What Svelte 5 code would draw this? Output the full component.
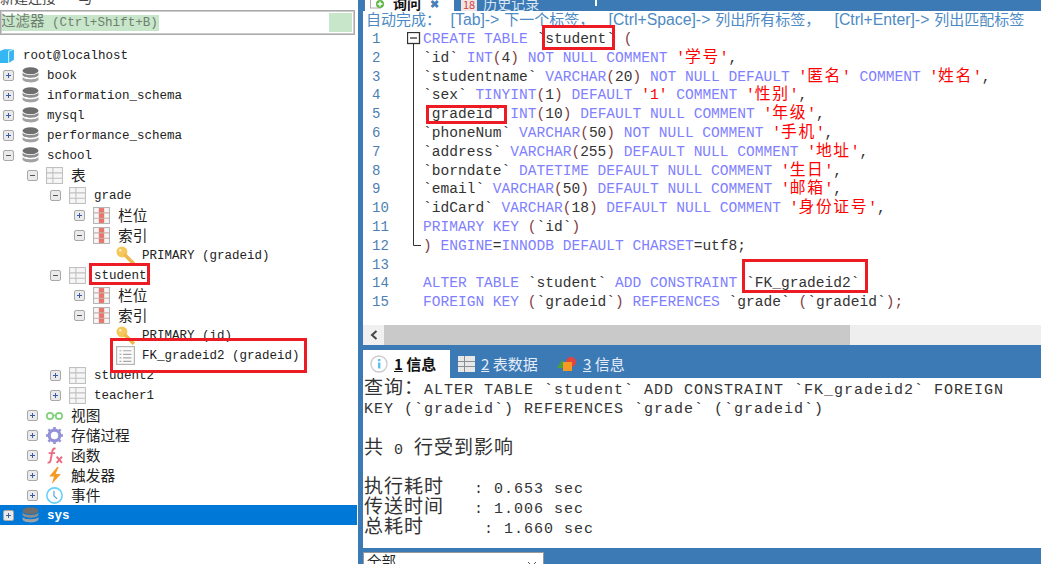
<script lang="ts">
  type Row = { depth: number; label: string; icon: string; exp?: string; selected?: boolean };

  const rows: Row[] = [
    { depth: -1, label: "root@localhost", icon: "server" },
    { depth: 0, label: "book", icon: "db", exp: "+" },
    { depth: 0, label: "information_schema", icon: "db", exp: "+" },
    { depth: 0, label: "mysql", icon: "db", exp: "+" },
    { depth: 0, label: "performance_schema", icon: "db", exp: "+" },
    { depth: 0, label: "school", icon: "db", exp: "-" },
    { depth: 1, label: "表", icon: "table", exp: "-" },
    { depth: 2, label: "grade", icon: "table", exp: "-" },
    { depth: 3, label: "栏位", icon: "columns", exp: "+" },
    { depth: 3, label: "索引", icon: "columns", exp: "-" },
    { depth: 4, label: "PRIMARY (gradeid)", icon: "key" },
    { depth: 2, label: "student", icon: "table", exp: "-" },
    { depth: 3, label: "栏位", icon: "columns", exp: "+" },
    { depth: 3, label: "索引", icon: "columns", exp: "-" },
    { depth: 4, label: "PRIMARY (id)", icon: "key" },
    { depth: 4, label: "FK_gradeid2 (gradeid)", icon: "index" },
    { depth: 2, label: "student2", icon: "table", exp: "+" },
    { depth: 2, label: "teacher1", icon: "table", exp: "+" },
    { depth: 1, label: "视图", icon: "view", exp: "+" },
    { depth: 1, label: "存储过程", icon: "gear", exp: "+" },
    { depth: 1, label: "函数", icon: "fx", exp: "+" },
    { depth: 1, label: "触发器", icon: "bolt", exp: "+" },
    { depth: 1, label: "事件", icon: "clock", exp: "+" },
    { depth: 0, label: "sys", icon: "db", exp: "+", selected: true },
  ];

  // k keyword, i identifier, p paren, s string
  const code: [string, string][][] = [
    [["k", "CREATE TABLE "], ["i", "`student` "], ["p", "("]],
    [["i", "`id` "], ["k", "INT"], ["p", "("], ["i", "4"], ["p", ")"], ["k", " NOT NULL COMMENT "], ["s", "'学号'"], ["i", ","]],
    [["i", "`studentname` "], ["k", "VARCHAR"], ["p", "("], ["i", "20"], ["p", ")"], ["k", " NOT NULL DEFAULT "], ["s", "'匿名'"], ["k", " COMMENT "], ["s", "'姓名'"], ["i", ","]],
    [["i", "`sex` "], ["k", "TINYINT"], ["p", "("], ["i", "1"], ["p", ")"], ["k", " DEFAULT "], ["s", "'1'"], ["k", " COMMENT "], ["s", "'性别'"], ["i", ","]],
    [["i", "`gradeid` "], ["k", "INT"], ["p", "("], ["i", "10"], ["p", ")"], ["k", " DEFAULT NULL COMMENT "], ["s", "'年级'"], ["i", ","]],
    [["i", "`phoneNum` "], ["k", "VARCHAR"], ["p", "("], ["i", "50"], ["p", ")"], ["k", " NOT NULL COMMENT "], ["s", "'手机'"], ["i", ","]],
    [["i", "`address` "], ["k", "VARCHAR"], ["p", "("], ["i", "255"], ["p", ")"], ["k", " DEFAULT NULL COMMENT "], ["s", "'地址'"], ["i", ","]],
    [["i", "`borndate` "], ["k", "DATETIME DEFAULT NULL COMMENT "], ["s", "'生日'"], ["i", ","]],
    [["i", "`email` "], ["k", "VARCHAR"], ["p", "("], ["i", "50"], ["p", ")"], ["k", " DEFAULT NULL COMMENT "], ["s", "'邮箱'"], ["i", ","]],
    [["i", "`idCard` "], ["k", "VARCHAR"], ["p", "("], ["i", "18"], ["p", ")"], ["k", " DEFAULT NULL COMMENT "], ["s", "'身份证号'"], ["i", ","]],
    [["k", "PRIMARY KEY "], ["p", "("], ["i", "`id`"], ["p", ")"]],
    [["p", ") "], ["k", "ENGINE"], ["i", "="], ["k", "INNODB DEFAULT CHARSET"], ["i", "=utf8;"]],
    [],
    [["k", "ALTER TABLE "], ["i", "`student` "], ["k", "ADD CONSTRAINT "], ["i", "`FK_gradeid2`"]],
    [["k", "FOREIGN KEY "], ["p", "("], ["i", "`gradeid`"], ["p", ") "], ["k", "REFERENCES "], ["i", "`grade` "], ["p", "("], ["i", "`gradeid`"], ["p", ");"]],
  ];

  const hint = "自动完成\uff1a  [Tab]-> 下一个标签\uff0c   [Ctrl+Space]-> 列出所有标签\uff0c   [Ctrl+Enter]-> 列出匹配标签";

  const messages = [
    "查询\uff1aALTER TABLE `student` ADD CONSTRAINT `FK_gradeid2` FOREIGN",
    "KEY (`gradeid`) REFERENCES `grade` (`gradeid`)",
    "",
    "共 0 行受到影响",
    "",
    "执行耗时   : 0.653 sec",
    "传送时间   : 1.006 sec",
    "总耗时      : 1.660 sec",
  ];

  const marks = [
    { x: 89, y: 263, w: 61, h: 22 },
    { x: 110, y: 338, w: 197, h: 35 },
    { x: 542, y: 25, w: 73, h: 25 },
    { x: 426, y: 105, w: 81, h: 19 },
    { x: 742, y: 259, w: 126, h: 34 },
  ];

  // split a string into latin and CJK runs so each gets its own size
  function runs(text: string): { cjk: boolean; text: string }[] {
    const parts = text.match(/[\u3000-\u9fff\uff00-\uffef]+|[^\u3000-\u9fff\uff00-\uffef]+/g) ?? [];
    return parts.map((part) => ({ cjk: /^[\u3000-\u9fff\uff00-\uffef]/.test(part), text: part }));
  }
</script>

{#snippet mixed(text: string)}
  {#each runs(text) as run}
    {#if run.cjk}<span class="cjk">{run.text}</span>{:else}{run.text}{/if}
  {/each}
{/snippet}

{#snippet icon(name: string)}
  {@const size = name === "key" || name === "index" ? 19 : 17}
  <svg viewBox="0 0 16 16" width={size} height={size} aria-hidden="true">
    {#if name === "server"}
      <path d="M1 4 L6 2 H15 V12 L10 15 H1 Z" fill="#35b5f2" />
      <path d="M10 4 V15 M10 4 L15 2" stroke="#d5f0fc" stroke-width="1" fill="none" />
    {:else if name === "db"}
      <ellipse cx="8" cy="3.6" rx="7.5" ry="3.3" fill="#6e6e6e" />
      <path d="M0.5 5 C2 8.5 14 8.5 15.5 5 V7.5 C14 11 2 11 0.5 7.5 Z" fill="#8d8d8d" />
      <path d="M0.5 9.4 C2 12.2 14 12.2 15.5 9.4 V11.8 C14 15.4 2 15.4 0.5 11.8 Z" fill="#a2a2a2" />
    {:else if name === "table"}
      <rect x="0.5" y="0.5" width="15" height="15" fill="#f6f6f6" stroke="#c0c0c0" />
      <path d="M0.5 5.5 H15.5 M0.5 10.5 H15.5 M6.5 0.5 V15.5" stroke="#c0c0c0" fill="none" />
    {:else if name === "columns"}
      <rect x="0.5" y="0.5" width="15" height="15" fill="#f6f6f6" stroke="#b5b5b5" />
      <rect x="5.5" y="1" width="5" height="14" fill="#e8756a" />
      <path d="M0.5 5.5 H15.5 M0.5 10.5 H15.5" stroke="#c8b0ac" fill="none" />
    {:else if name === "key"}
      <circle cx="5" cy="5" r="4.6" fill="#f5c65a" />
      <circle cx="3.6" cy="3.6" r="1" fill="#fff3cf" />
      <path d="M7 7 L15 15" stroke="#eeb94c" stroke-width="3" fill="none" />
    {:else if name === "index"}
      <rect x="0.5" y="0.5" width="15" height="15" fill="#fafafa" stroke="#b5b5b5" />
      <path d="M3 4 H4.5 M6 4 H13 M3 7 H4.5 M6 7 H13 M3 10 H4.5 M6 10 H13 M3 13 H4.5 M6 13 H13" stroke="#a8a8a8" fill="none" />
    {:else if name === "view"}
      <circle cx="3.8" cy="8.5" r="3" fill="none" stroke="#7fd27a" stroke-width="1.6" />
      <circle cx="12.2" cy="8.5" r="3" fill="none" stroke="#7fd27a" stroke-width="1.6" />
      <path d="M6.8 8 H9.2" stroke="#7fd27a" stroke-width="1.4" />
    {:else if name === "gear"}
      <circle cx="8" cy="8" r="5" fill="none" stroke="#9591d8" stroke-width="3" />
      <path d="M8 0 V3 M8 13 V16 M0 8 H3 M13 8 H16 M2.3 2.3 L4.5 4.5 M11.5 11.5 L13.7 13.7 M13.7 2.3 L11.5 4.5 M4.5 11.5 L2.3 13.7" stroke="#9591d8" stroke-width="2.4" />
    {:else if name === "fx"}
      <path d="M9 1.5 C6.5 0.8 6 3 5.6 5.5 L4.4 12 C4 14.6 3 15 1.5 14.6 M2.5 5.8 H8.5" fill="none" stroke="#ec6a82" stroke-width="1.8" />
      <path d="M10 9 L15 15 M15 9 L10 15" stroke="#ec6a82" stroke-width="1.8" />
    {:else if name === "bolt"}
      <path d="M10.5 0 L3 9 H7.5 L5.5 16 L14 6.5 H9 L12 0 Z" fill="#f59a23" />
    {:else if name === "clock"}
      <circle cx="8" cy="8" r="7.2" fill="#fff" stroke="#66d0fa" stroke-width="1.5" />
      <path d="M7.5 3.5 V8.5 L10.5 11" fill="none" stroke="#66a7d8" stroke-width="1.2" />
    {/if}
  </svg>
{/snippet}

<div class="app">
  <aside class="sidebar">
    <div class="caption"><span>新建连接 一与</span></div>
    <div class="filter">
      <span class="filter__text">{@render mixed("过滤器 (Ctrl+Shift+B)")}</span>
      <span class="filter__swatch"></span>
    </div>
    <ul class="tree">
      {#each rows as row}
        <li class="tree__row" class:selected={row.selected} style="margin-left: {Math.round(row.depth * 23.7)}px">
          <span class="tree__exp">
            {#if row.exp}
              <span class="expander" class:minus={row.exp === "-"}></span>
            {/if}
          </span>
          <span class="tree__icon">{@render icon(row.icon)}</span>
          <span class="tree__label">{@render mixed(row.label)}</span>
        </li>
      {/each}
    </ul>
  </aside>

  <main class="workspace">
    <div class="tabs-top">
      <div class="tab-top tab-top--active">
        <svg viewBox="0 0 14 14" width="14" height="14" aria-hidden="true">
          <rect x="0.5" y="0" width="10" height="11" fill="#fff" stroke="#aaa" />
          <circle cx="10" cy="7" r="4" fill="#5fb548" />
          <path d="M10 4.5 V9.5 M7.5 7 H12.5" stroke="#fff" stroke-width="1.4" />
        </svg>
        <span class="tab-top__name">询问</span>
        <span class="tab-top__close">✖</span>
      </div>
      <div class="tab-top">
        <span class="tab-top__badge">18</span>
        <span class="tab-top__name">历史记录</span>
        <span class="tab-top__tick"></span>
      </div>
    </div>

    <div class="hint">{@render mixed(hint)}</div>

    <div class="editor">
      <svg class="fold" viewBox="0 0 14 220" width="14" height="220" aria-hidden="true">
        <path d="M6.5 8 V213.5 H14" fill="none" stroke="#333" />
        <rect x="0.5" y="0.5" width="12" height="11" fill="#fff" stroke="#333" stroke-width="1.3" />
        <path d="M3 6 H10" stroke="#333" stroke-width="1.3" />
      </svg>
      {#each code as line, i}
        <div class="line">
          <span class="line__num">{i + 1}</span>
          <span class="line__code">{#each line as [kind, text]}<span class={kind}>{@render mixed(text)}</span>{/each}</span>
        </div>
      {/each}
    </div>

    <div class="hscroll">
      <span class="hscroll__btn">
        <svg viewBox="0 0 8 10" width="8" height="10" aria-hidden="true"><path d="M6.5 1 L2 5 L6.5 9" fill="none" stroke="#444" stroke-width="2" /></svg>
      </span>
      <span class="hscroll__thumb"></span>
    </div>

    <div class="result-tabs">
      <div class="result-tab result-tab--active">
        <svg viewBox="0 0 18 18" width="18" height="18" aria-hidden="true">
          <circle cx="9" cy="9" r="8" fill="#fff" stroke="#ccc" stroke-width="1.4" />
          <rect x="8" y="7.5" width="2.4" height="6" fill="#5cc0ee" />
          <rect x="8" y="4" width="2.4" height="2.2" fill="#5cc0ee" />
        </svg>
        <span><u>1</u> 信息</span>
      </div>
      <div class="result-tab">
        <svg viewBox="0 0 17 16" width="17" height="16" aria-hidden="true">
          <rect x="0" y="0" width="17" height="16" fill="#e8e8e8" />
          <path d="M0 5.5 H17 M0 10.5 H17 M6.5 0 V16" stroke="#8a8f96" fill="none" />
        </svg>
        <span><u>2</u> 表数据</span>
      </div>
      <div class="result-tab result-tab--last">
        <svg viewBox="0 0 20 18" width="20" height="18" aria-hidden="true">
          <path d="M0 13 L5 5 L10 13 Z" fill="#4aa03f" />
          <circle cx="14" cy="7" r="5" fill="#e2453c" />
          <rect x="6" y="7" width="9" height="9" fill="#f59a23" />
        </svg>
        <span><u>3</u> 信息</span>
      </div>
    </div>

    <div class="messages">
      {#each messages as message}
        <div class="message">{@render mixed(message)}</div>
      {/each}
    </div>

    <div class="footer">
      <div class="select">
        <span>全部</span>
        <svg viewBox="0 0 10 6" width="10" height="6" aria-hidden="true"><path d="M1 1 L5 5 L9 1" fill="none" stroke="#555" /></svg>
      </div>
    </div>
  </main>

  {#each marks as mark}
    <div class="mark" style="left: {mark.x}px; top: {mark.y}px; width: {mark.w}px; height: {mark.h}px"></div>
  {/each}
</div>

<style>
  :global(body) {
    margin: 0;
    background: #fff;
  }

  .app {
    position: relative;
    display: flex;
    width: 1041px;
    height: 564px;
    overflow: hidden;
    background: #3c7ab6;
    color: #222;
    font-family: "Liberation Mono", "Noto Sans CJK SC", monospace;
  }

  .sidebar {
    flex: 0 0 358px;
    box-sizing: border-box;
    height: 100%;
    padding-right: 1px;
    background: #fff;
    overflow: hidden;
  }

  .caption {
    display: flex;
    align-items: flex-end;
    height: 9px;
    margin-bottom: 1px;
    overflow: hidden;
    font-size: 14px;
    line-height: 20px;
    color: #444;
  }

  .filter {
    display: flex;
    align-items: center;
    justify-content: space-between;
    box-sizing: border-box;
    height: 25px;
    margin-right: 2px;
    padding: 0 2px 0 0;
    border: 1px solid #aaa;
    outline: 1px solid #ccc;
    outline-offset: -2px;
    margin-bottom: 10px;
  }

  .filter__text {
    padding-right: 1px;
    background: #c8e6c9;
    color: #6f7f70;
    font-size: 12.6px;
    line-height: 15px;
    white-space: pre;
  }

  .filter__text .cjk {
    font-size: 14.5px;
  }

  .filter__swatch {
    width: 23px;
    height: 19px;
    background: #c8e6c9;
  }

  .tree {
    margin: 0;
    padding: 0;
    list-style: none;
    font-size: 12.5px;
  }

  .tree__row {
    display: flex;
    align-items: center;
    height: 20px;
    white-space: pre;
  }

  .tree__row.selected {
    background: #0078d7;
    color: #fff;
    font-weight: 700;
  }

  .tree__exp {
    display: flex;
    flex: 0 0 16px;
    justify-content: center;
  }

  .expander {
    position: relative;
    box-sizing: border-box;
    width: 11px;
    height: 11px;
    border: 1px solid #a8a8a8;
    border-radius: 2px;
    background: #eaeaea;
  }

  .expander::before,
  .expander::after {
    content: "";
    position: absolute;
    background: #3d5da8;
  }

  .expander::before {
    left: 2px;
    right: 2px;
    top: 4px;
    height: 1px;
  }

  .expander::after {
    top: 2px;
    bottom: 2px;
    left: 4px;
    width: 1px;
  }

  .expander.minus::before {
    background: #555;
  }

  .expander.minus::after {
    display: none;
  }

  .tree__icon {
    display: flex;
    flex: 0 0 31px;
    justify-content: center;
    margin-left: -1px;
  }

  .tree__label {
    margin-left: 1px;
    padding-top: 2px;
  }

  .tree__label:has(.cjk) {
    padding-top: 0;
    padding-bottom: 2px;
  }

  .tree__label .cjk {
    font-size: 14.7px;
  }

  .workspace {
    display: flex;
    flex: 1;
    flex-direction: column;
    min-width: 0;
    height: 100%;
    padding-left: 5px;
  }

  .tabs-top {
    display: flex;
    flex: 0 0 11px;
    align-items: flex-end;
    overflow: hidden;
    font-size: 14px;
    line-height: 16px;
  }

  .tab-top {
    display: flex;
    align-items: flex-end;
    gap: 6px;
    flex: 0 0 auto;
    height: 11px;
    padding: 0 8px 0 7px;
    color: #dbe7f3;
    font-family: "Noto Sans CJK SC", sans-serif;
  }

  .tab-top > * {
    margin-top: -5px;
  }

  .tab-top--active {
    gap: 9px;
    width: 89px;
    margin: 0 0 0 2px;
    padding: 0 0 0 5px;
    box-sizing: border-box;
    background: #fff;
    color: #111;
    font-weight: 700;
  }

  .tab-top__close {
    color: #4a7fb8;
    font-size: 11px;
  }

  .tab-top__badge {
    padding: 0 2px;
    background: #f3e4e4;
    color: #d0423e;
    font-size: 11px;
    line-height: 14px;
  }

  .tab-top__tick {
    width: 2px;
    height: 6px;
    margin-left: 50px;
    background: #fff;
    align-self: flex-start;
    margin-top: 0;
  }

  .hint {
    flex: 0 0 19px;
    padding-left: 3px;
    background: #fff;
    color: #4d8ac4;
    font-family: "Liberation Sans", "Noto Sans CJK SC", sans-serif;
    font-size: 15.8px;
    line-height: 18px;
    word-spacing: 0.4px;
    white-space: pre;
    overflow: hidden;
  }

  .hint .cjk {
    font-size: 15px;
  }

  .editor {
    position: relative;
    flex: 0 0 295px;
    background: #fff;
    font-size: 14.55px;
    line-height: 18.8px;
    overflow: hidden;
  }

  .fold {
    position: absolute;
    left: 44px;
    top: 2px;
  }

  .line {
    display: flex;
    height: 18.8px;
    white-space: pre;
  }

  .line__num {
    flex: 0 0 60px;
    box-sizing: border-box;
    padding-left: 9px;
    color: #4d7fb3;
    font-size: 14px;
  }

  /* CJK glyphs take two cells of the mono grid */
  .line .cjk {
    font-size: 15.8px;
    letter-spacing: 1.66px;
  }

  .k {
    color: #8080ff;
  }

  .i {
    color: #333;
  }

  .p {
    color: #804040;
  }

  .s {
    color: #f00;
  }

  .hscroll {
    display: flex;
    flex: 0 0 20px;
    background: #eee;
  }

  .hscroll__btn {
    display: flex;
    align-items: center;
    justify-content: center;
    width: 21px;
    background: #f0f0f0;
  }

  .hscroll__thumb {
    width: 466px;
    background: #c9c9c9;
  }

  .result-tabs {
    display: flex;
    flex: 0 0 28px;
    margin-top: 5px;
    color: #e4edf6;
    font-family: "Noto Sans CJK SC", sans-serif;
    font-size: 15px;
    line-height: 28px;
  }

  .result-tab {
    display: flex;
    align-items: center;
    gap: 6px;
    width: 101px;
    box-sizing: border-box;
    padding-left: 8px;
  }

  .result-tab--active {
    width: 87px;
    padding-left: 7px;
    background: #fff;
    color: #111;
    font-weight: 700;
  }

  .result-tab--last {
    padding-left: 6px;
  }

  .messages {
    flex: 0 0 170px;
    box-sizing: border-box;
    padding: 2px 0 0 1px;
    background: #fff;
    color: #333;
    font-size: 15px;
    letter-spacing: 1px;
    overflow: hidden;
  }

  .message {
    height: 19.9px;
    line-height: 19.9px;
    white-space: pre;
  }

  .message .cjk {
    font-size: 19px;
    letter-spacing: 1px;
  }

  .footer {
    flex: 1;
    padding-top: 4px;
    overflow: hidden;
  }

  .select {
    display: flex;
    align-items: flex-start;
    justify-content: space-between;
    box-sizing: border-box;
    width: 181px;
    height: 24px;
    padding: 0 6px 0 3px;
    border: 1px solid #999;
    background: #fff;
    font-size: 14.5px;
    line-height: 20px;
  }

  .select svg {
    margin-top: 8px;
  }

  .mark {
    position: absolute;
    box-sizing: border-box;
    border: 3px solid #ed1c24;
    pointer-events: none;
  }
</style>
